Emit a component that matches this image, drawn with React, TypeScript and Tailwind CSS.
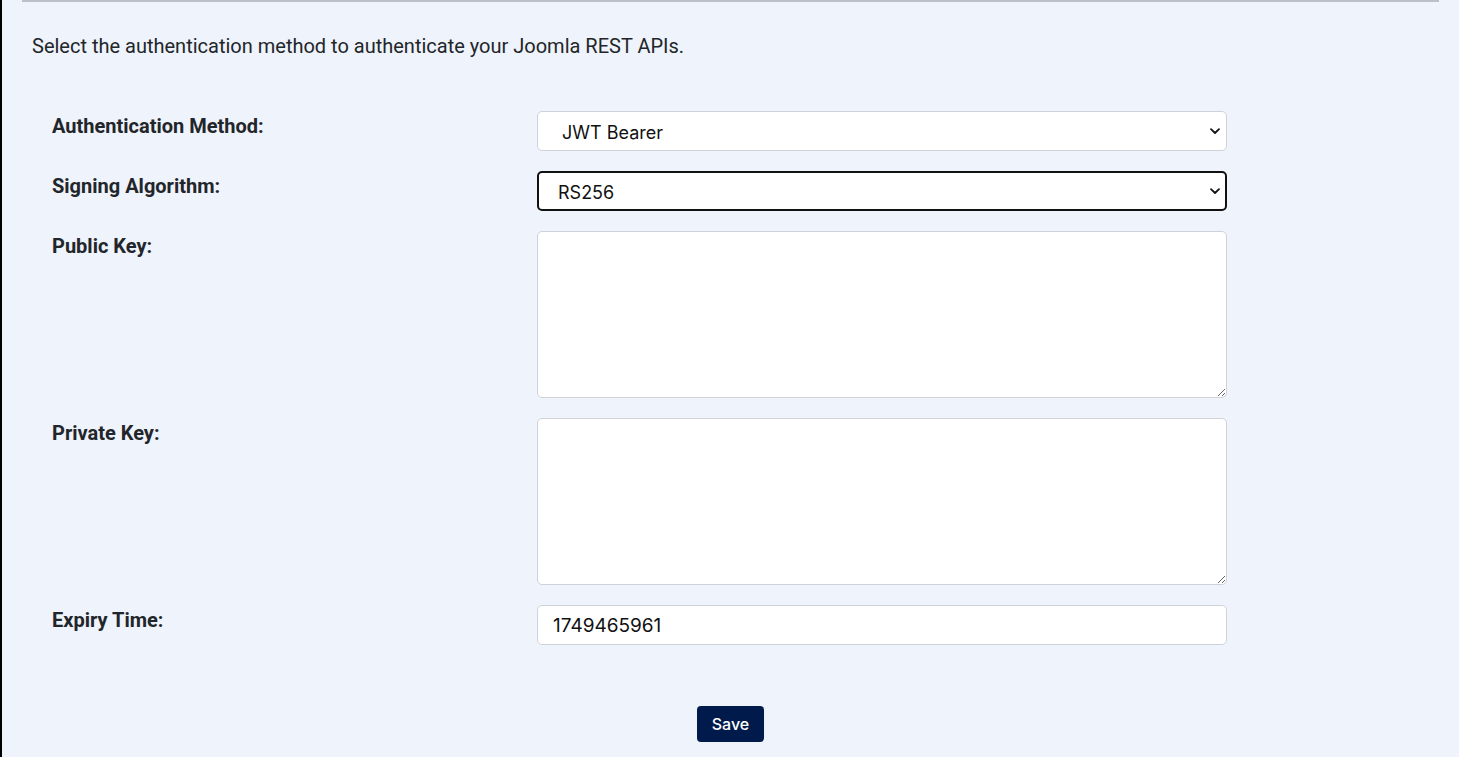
import React from "react";

function Chevron() {
  return (
    <svg
      className="pointer-events-none absolute right-[6px] top-1/2 -translate-y-1/2"
      width="12"
      height="12"
      viewBox="0 0 12 12"
      fill="none"
    >
      <path d="M2 4.2 L6 8 L10 4.2" stroke="#111" strokeWidth="1.8" strokeLinecap="round" strokeLinejoin="round" />
    </svg>
  );
}

export default function App() {
  const label = "text-[20px] font-bold text-[#22262a] leading-[30px]";
  const inputFont = { fontFamily: "Inter, 'Noto Sans', sans-serif" };
  return (
    <div
      className="w-full h-[757px] bg-[#eff3fb] border-l-2 border-black overflow-hidden"
      style={{ fontFamily: "Roboto, 'Noto Sans', sans-serif" }}
    >
      <div className="mx-[20px] h-[2px] bg-[#bcc0c7]" />
      <p className="mt-[29px] pl-[30px] text-[20px] leading-[30px] text-[#22262a]">
        Select the authentication method to authenticate your Joomla REST APIs.
      </p>

      <div className="mt-[50px] pl-[50px] flex flex-col gap-[20px]">
        <div className="grid grid-cols-[485px_690px]">
          <div className={label}>Authentication Method:</div>
          <div className="relative h-[40px]">
            <select
              defaultValue="jwt"
              className="block appearance-none w-full h-[40px] bg-white border border-[#cfd3d8] rounded-[5px] pl-[24px] pt-[3px] text-[18px] text-[#111] outline-none"
              style={inputFont}
            >
              <option value="jwt">JWT Bearer</option>
            </select>
            <Chevron />
          </div>
        </div>

        <div className="grid grid-cols-[485px_690px]">
          <div className={label}>Signing Algorithm:</div>
          <div className="relative h-[40px]">
            <select
              defaultValue="rs"
              className="block appearance-none w-full h-[40px] bg-white border-2 border-[#111] rounded-[5px] pl-[19px] pt-[2px] text-[18px] text-[#111] outline-none"
              style={inputFont}
            >
              <option value="rs">RS256</option>
            </select>
            <Chevron />
          </div>
        </div>

        <div className="grid grid-cols-[485px_690px]">
          <div className={label}>Public Key:</div>
          <textarea
            className="block w-full h-[167px] bg-white border border-[#cfd3d8] rounded-[5px] outline-none"
            style={inputFont}
          />
        </div>

        <div className="grid grid-cols-[485px_690px]">
          <div className={label}>Private Key:</div>
          <textarea
            className="block w-full h-[167px] bg-white border border-[#cfd3d8] rounded-[5px] outline-none"
            style={inputFont}
          />
        </div>

        <div className="grid grid-cols-[485px_690px]">
          <div className={label}>Expiry Time:</div>
          <input
            defaultValue="1749465961"
            className="block w-full h-[40px] bg-white border border-[#cfd3d8] rounded-[5px] pl-[15px] pt-[1px] text-[19px] text-[#111] outline-none"
            style={inputFont}
          />
        </div>
      </div>

      <div className="flex justify-center mt-[61px]">
        <button
          className="h-[36px] w-[67px] rounded-[4px] bg-[#001a4b] text-white text-[16px] font-medium"
          style={inputFont}
        >
          Save
        </button>
      </div>
    </div>
  );
}
